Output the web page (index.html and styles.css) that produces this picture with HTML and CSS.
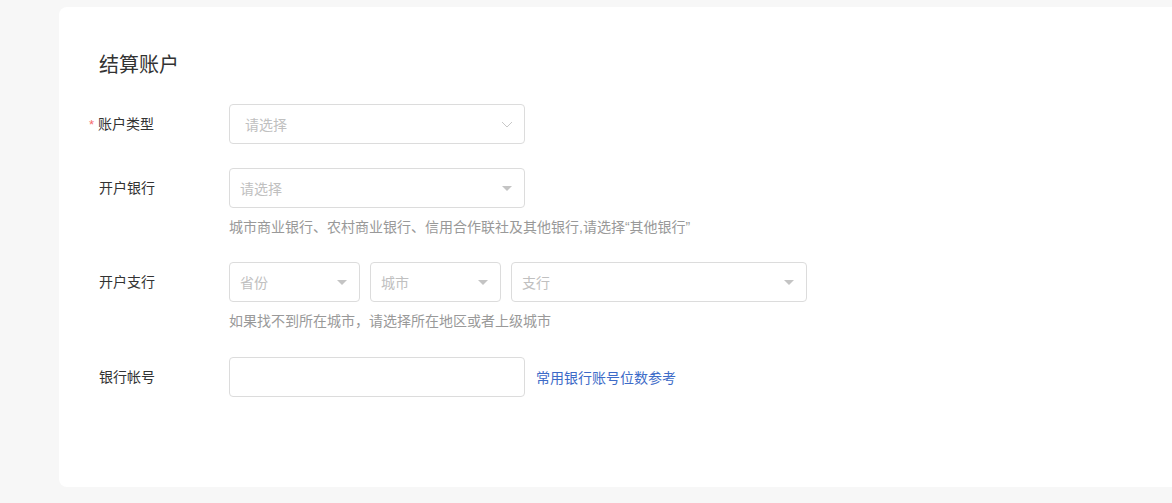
FILE: index.html
```html
<!DOCTYPE html>
<html lang="zh-CN">
<head>
    <meta charset="UTF-8">
    <meta name="viewport" content="width=device-width, initial-scale=1.0">
    <title>结算账户</title>
    <link rel="stylesheet" href="styles.css">
</head>
<body>
    <div class="page">
        <div class="card">
            <h2 class="card-title">结算账户</h2>

            <!-- 账户类型 -->
            <div class="form-row">
                <label class="form-label"><span class="required">*</span>账户类型</label>
                <div class="form-field">
                    <div class="select select-wide select-outline">
                        <span class="placeholder">请选择</span>
                        <svg class="chevron" width="12" height="7" viewBox="0 0 12 7">
                            <path d="M1 1 L6 6 L11 1" fill="none" stroke="#c8c8c8" stroke-width="1"/>
                        </svg>
                    </div>
                </div>
            </div>

            <!-- 开户银行 -->
            <div class="form-row">
                <label class="form-label">开户银行</label>
                <div class="form-field">
                    <div class="select select-wide">
                        <span class="placeholder">请选择</span>
                        <span class="caret"></span>
                    </div>
                    <p class="form-help">城市商业银行、农村商业银行、信用合作联社及其他银行,请选择“其他银行”</p>
                </div>
            </div>

            <!-- 开户支行 -->
            <div class="form-row">
                <label class="form-label">开户支行</label>
                <div class="form-field">
                    <div class="select-group">
                        <div class="select select-small">
                            <span class="placeholder">省份</span>
                            <span class="caret"></span>
                        </div>
                        <div class="select select-small">
                            <span class="placeholder">城市</span>
                            <span class="caret"></span>
                        </div>
                        <div class="select select-wide">
                            <span class="placeholder">支行</span>
                            <span class="caret"></span>
                        </div>
                    </div>
                    <p class="form-help help-branch">如果找不到所在城市，请选择所在地区或者上级城市</p>
                </div>
            </div>

            <!-- 银行帐号 -->
            <div class="form-row">
                <label class="form-label">银行帐号</label>
                <div class="form-field form-inline">
                    <input type="text" class="text-input">
                    <a class="form-link" href="#">常用银行账号位数参考</a>
                </div>
            </div>
        </div>
    </div>
</body>
</html>
```

FILE: styles.css
```css
html, body {
    margin: 0;
    padding: 0;
}

body {
    font-family: "Liberation Sans", "Noto Sans CJK SC", sans-serif;
    background-color: #f7f7f7;
    color: #333;
    overflow: hidden;
}

.page {
    padding: 7px 0 16px 59px;
}

.card {
    width: 1140px;
    height: 480px;
    box-sizing: border-box;
    background-color: #fff;
    border-radius: 8px;
    padding: 44px 40px 0 40px;
}

.card-title {
    margin: 0 0 25px 0;
    font-size: 20px;
    font-weight: normal;
    line-height: 28px;
    color: #333;
}

.form-row {
    display: flex;
    align-items: flex-start;
    margin-bottom: 24px;
}

.form-label {
    width: 130px;
    height: 40px;
    flex-shrink: 0;
    font-size: 14px;
    line-height: 40px;
    color: #333;
}

.required {
    color: #f56c6c;
    margin-left: -10px;
    margin-right: 4px;
    font-size: 13px;
}

.form-field {
    display: flex;
    flex-direction: column;
}

.form-inline {
    flex-direction: row;
    align-items: center;
}

.select {
    height: 40px;
    box-sizing: border-box;
    border: 1px solid #dcdcdc;
    border-radius: 4px;
    display: flex;
    align-items: center;
    justify-content: space-between;
    padding: 0 10px;
    background-color: #fff;
}

.select-wide {
    width: 296px;
}

.select-small {
    width: 131px;
}

.select-outline {
    padding: 0 11px 0 15px;
}

.placeholder {
    font-size: 14px;
    color: #c0c0c0;
}

.caret {
    width: 0;
    height: 0;
    border-left: 5px solid transparent;
    border-right: 5px solid transparent;
    border-top: 5px solid #c4c4c4;
    margin-right: 2px;
}

.select-group {
    display: flex;
    gap: 10px;
}

.form-help {
    margin: 8px 0 0 0;
    font-size: 14px;
    line-height: 22px;
    color: #999;
}

.help-branch {
    margin-bottom: 1px;
}

.text-input {
    width: 296px;
    height: 40px;
    box-sizing: border-box;
    border: 1px solid #dcdcdc;
    border-radius: 4px;
    padding: 0 10px;
    font-family: inherit;
    font-size: 14px;
    outline: none;
}

.form-link {
    margin-left: 11px;
    font-size: 14px;
    color: #3d6bc8;
    text-decoration: none;
}
```
